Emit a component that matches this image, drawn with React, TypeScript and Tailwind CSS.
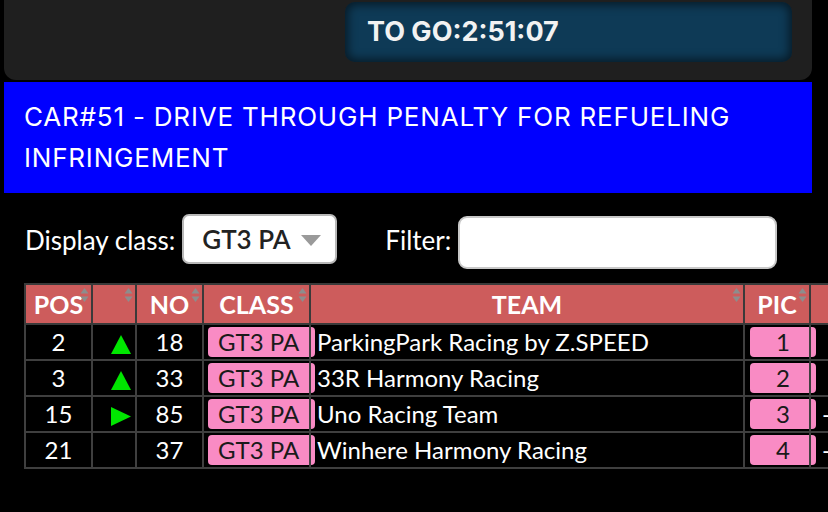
import React from 'react';

type Row = {
  pos: string;
  move: 'up' | 'right' | '';
  no: string;
  cls: string;
  team: string;
  pic: string;
  extra: string;
};

const rows: Row[] = [
  { pos: '2', move: 'up', no: '18', cls: 'GT3 PA', team: 'ParkingPark Racing by Z.SPEED', pic: '1', extra: '' },
  { pos: '3', move: 'up', no: '33', cls: 'GT3 PA', team: '33R Harmony Racing', pic: '2', extra: '' },
  { pos: '15', move: 'right', no: '85', cls: 'GT3 PA', team: 'Uno Racing Team', pic: '3', extra: '-' },
  { pos: '21', move: '', no: '37', cls: 'GT3 PA', team: 'Winhere Harmony Racing', pic: '4', extra: '-' },
];

function SortIcon() {
  return (
    <svg className="absolute right-[2px] top-[2px]" width="9" height="16" viewBox="0 0 9 16">
      <path d="M4.5 1 L8.5 6.5 L0.5 6.5 Z" fill="#8d8d8d" />
      <path d="M4.5 15 L8.5 9.5 L0.5 9.5 Z" fill="#8d8d8d" />
    </svg>
  );
}

function Move({ dir }: { dir: Row['move'] }) {
  if (dir === 'up') {
    return (
      <svg width="20" height="19" viewBox="0 0 20 19" className="inline-block align-middle">
        <path d="M10 0 L20 19 L0 19 Z" fill="#00e600" />
      </svg>
    );
  }
  if (dir === 'right') {
    return (
      <svg width="20" height="19" viewBox="0 0 20 19" className="inline-block align-middle">
        <path d="M0 0 L20 9.5 L0 19 Z" fill="#00e600" />
      </svg>
    );
  }
  return null;
}

function Th({ children, sort = true }: { children?: React.ReactNode; sort?: boolean }) {
  return (
    <th className="relative h-[40px] border-2 border-[#3a3a3a] bg-[#cd5c5c] p-0 text-center text-[25px] font-bold leading-[36px] text-white">
      {children}
      {sort && <SortIcon />}
    </th>
  );
}

const td = 'border-2 border-[#3f3f3f] p-0';

export default function App() {
  return (
    <div className="h-[512px] w-[828px] overflow-hidden bg-black pl-[4px]" style={{ fontFamily: 'Lato, "Noto Sans", sans-serif' }}>
      <div className="flex h-[80px] w-[808px] justify-end rounded-b-[12px] bg-[#1f1f1f] pr-[20px] pt-[2px]">
        <div className="flex h-[60px] w-[447px] items-center rounded-[10px] bg-[#0e3a56] pl-[22px] shadow-[inset_0_0_10px_3px_rgba(0,0,0,0.55)]">
          <span className="text-[27px] font-bold text-[#f2f2f2]" style={{ fontFamily: 'Inter, "Liberation Sans", sans-serif' }}>
            TO GO:2:51:07
          </span>
        </div>
      </div>

      <div
        className="mt-[2px] h-[111px] w-[808px] bg-[#0000ff] pl-[20px] pr-[30px] pt-[14px] text-[26px] leading-[41px] tracking-[0.8px] text-white"
        style={{ fontFamily: 'Inter, "Liberation Sans", sans-serif' }}
      >
        CAR#51 - DRIVE THROUGH PENALTY FOR REFUELING INFRINGEMENT
      </div>

      <div className="ml-[21px] mt-[21px] flex items-start text-[26px] text-white">
        <span className="h-[50px] leading-[52px]">Display class:</span>
        <div className="ml-[7px] flex h-[50px] w-[155px] items-center rounded-[7px] border-2 border-[#b8b8b8] bg-white pl-[18px]">
          <span className="font-semibold text-[#222]">GT3 PA</span>
          <svg className="ml-[10px] mt-[2px]" width="20" height="11" viewBox="0 0 20 11">
            <path d="M0 0 L20 0 L10 11 Z" fill="#9a9a9a" />
          </svg>
        </div>
        <span className="ml-[48px] h-[50px] leading-[52px]">Filter:</span>
        <div className="ml-[7px] mt-[2px] h-[53px] w-[319px] rounded-[9px] border-2 border-[#c8c8c8] bg-white" />
      </div>

      <table className="ml-[20px] mt-[14px] w-[865px] table-fixed border-collapse text-[24px] leading-[30px]">
        <colgroup>
          <col className="w-[67px]" />
          <col className="w-[44px]" />
          <col className="w-[67px]" />
          <col className="w-[107px]" />
          <col className="w-[434px]" />
          <col className="w-[66px]" />
          <col className="w-[80px]" />
        </colgroup>
        <thead>
          <tr>
            <Th>POS</Th>
            <Th />
            <Th>NO</Th>
            <Th>CLASS</Th>
            <Th>TEAM</Th>
            <Th>PIC</Th>
            <Th sort={false} />
          </tr>
        </thead>
        <tbody>
          {rows.map((r) => (
            <tr key={r.no} className="h-[36px]">
              <td className={`${td} text-center text-white`}>{r.pos}</td>
              <td className={`${td} pl-[14px] text-center`}>
                <Move dir={r.move} />
              </td>
              <td className={`${td} text-center text-white`}>{r.no}</td>
              <td className={`${td} pl-[4px]`}>
                <span className="block h-[30px] w-[107px] rounded-[4px] bg-[#f98bc4] pl-[10px] leading-[30px] text-[#1a1a1a]">
                  {r.cls}
                </span>
              </td>
              <td className={`${td} pl-[6px] text-white`}>{r.team}</td>
              <td className={`${td} pl-[5px]`}>
                <span className="block h-[30px] w-[66px] rounded-[4px] bg-[#f98bc4] text-center leading-[30px] text-[#1a1a1a]">
                  {r.pic}
                </span>
              </td>
              <td className={`${td} pl-[11px] text-white`}>{r.extra}</td>
            </tr>
          ))}
        </tbody>
      </table>
    </div>
  );
}
